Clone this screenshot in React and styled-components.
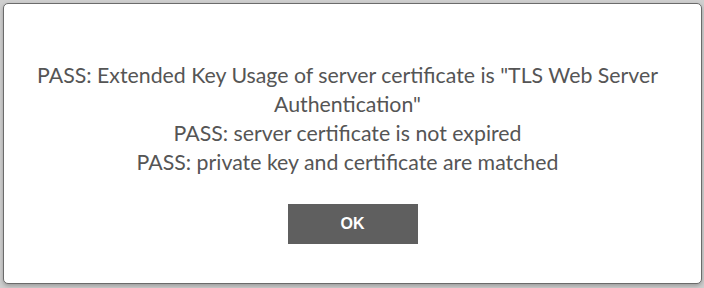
import React from "react"
import styled, { createGlobalStyle } from "styled-components"

const Global = createGlobalStyle`
    html, body {
        margin: 0;
        padding: 0;
        background: #cfcfcf;
    }
`

const Page = styled.div`
    width: 704px;
    height: 288px;
    padding: 3px 2px 0 3px;
    box-sizing: border-box;
`

const Dialog = styled.div`
    box-sizing: border-box;
    width: 699px;
    height: 281px;
    background: #fff;
    border: 1px solid #6b6b6b;
    border-radius: 5px;
    box-shadow: 0 2px 4px rgba(0, 0, 0, 0.25);
    display: flex;
    flex-direction: column;
    align-items: center;
    padding: 57px 20px 0;
`

const Message = styled.div`
    font-family: "Lato", "Noto Sans", sans-serif;
    font-size: 21.3px;
    line-height: 29px;
    color: #555;
    text-align: center;
    margin-right: 10px;
`

const Line = styled.div``

const Button = styled.button`
    margin-top: 27px;
    width: 130px;
    height: 40px;
    border: none;
    background: #5f5f5f;
    color: #fff;
    font-family: "Liberation Sans", Arial, sans-serif;
    font-weight: bold;
    font-size: 16px;
    cursor: pointer;
`

const lines = [
    'PASS: Extended Key Usage of server certificate is "TLS Web Server Authentication"',
    "PASS: server certificate is not expired",
    "PASS: private key and certificate are matched",
]

const App = () =>
    <>
        <Global />
        <Page>
            <Dialog>
                <Message>
                    {lines.map(line => <Line key={line}>{line}</Line>)}
                </Message>
                <Button>OK</Button>
            </Dialog>
        </Page>
    </>

export default App
